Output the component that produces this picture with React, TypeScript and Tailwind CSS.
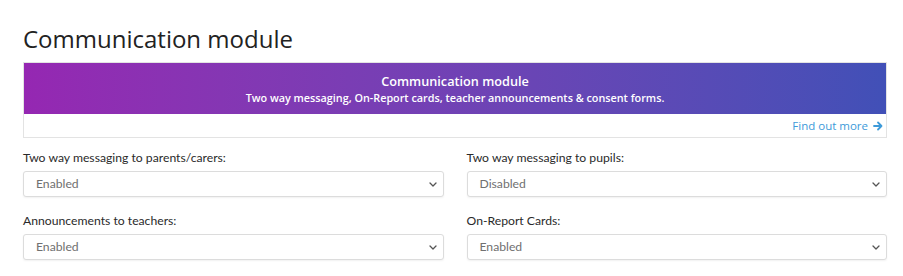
import React from "react";

function Chevron() {
  return (
    <svg width="8" height="5" viewBox="0 0 8 5" fill="none" className="shrink-0">
      <path d="M1 1l3 3 3-3" stroke="#555" strokeWidth="1.3" strokeLinecap="round" strokeLinejoin="round" />
    </svg>
  );
}

function Field({ label, value }: { label: string; value: string }) {
  return (
    <div className="flex flex-col">
      <div className="text-[12.2px] leading-[16px] text-[#2a2a2a]" style={{ fontFamily: 'Lato, sans-serif' }}>{label}</div>
      <div className="mt-[5px] flex h-[26px] items-center justify-between rounded-[3px] border border-[#dcdcdc] bg-white pl-[12px] pr-[6px] shadow-[0_1px_2px_rgba(0,0,0,0.06)]">
        <span className="text-[12.2px] text-[#707070]" style={{ fontFamily: 'Lato, sans-serif' }}>{value}</span>
        <Chevron />
      </div>
    </div>
  );
}

export default function App() {
  return (
    <div className="h-[276px] w-[903px] bg-white" style={{ fontFamily: '"Open Sans", sans-serif' }}>
      <div className="pl-[23px] pr-[16px] pt-[23px]">
        <h1 className="text-[24px] leading-[32px] font-normal text-[#222]">Communication module</h1>
        <div className="mt-[7px] border border-[#e3e3e3]">
          <div className="flex h-[51px] flex-col items-center justify-center bg-gradient-to-r from-[#9527b2] to-[#4150b7] text-white">
            <div className="text-[12.7px] leading-[18px] font-semibold">Communication module</div>
            <div className="text-[10.8px] leading-[16px] font-semibold">Two way messaging, On-Report cards, teacher announcements &amp; consent forms.</div>
          </div>
          <div className="flex h-[23px] items-center justify-end pr-[3px]">
            <span className="text-[11.5px] text-[#3d9ad9]">Find out more</span>
            <svg width="10" height="10" viewBox="0 0 10 10" className="ml-[5px]">
              <path d="M1 5h7.5M5 1.5L8.5 5 5 8.5" stroke="#3d9ad9" strokeWidth="1.8" fill="none" strokeLinecap="round" strokeLinejoin="round" />
            </svg>
          </div>
        </div>
        <div className="mt-[12px] grid grid-cols-2 gap-x-[23px] gap-y-[16px]">
          <Field label="Two way messaging to parents/carers:" value="Enabled" />
          <Field label="Two way messaging to pupils:" value="Disabled" />
          <Field label="Announcements to teachers:" value="Enabled" />
          <Field label="On-Report Cards:" value="Enabled" />
        </div>
      </div>
    </div>
  );
}
